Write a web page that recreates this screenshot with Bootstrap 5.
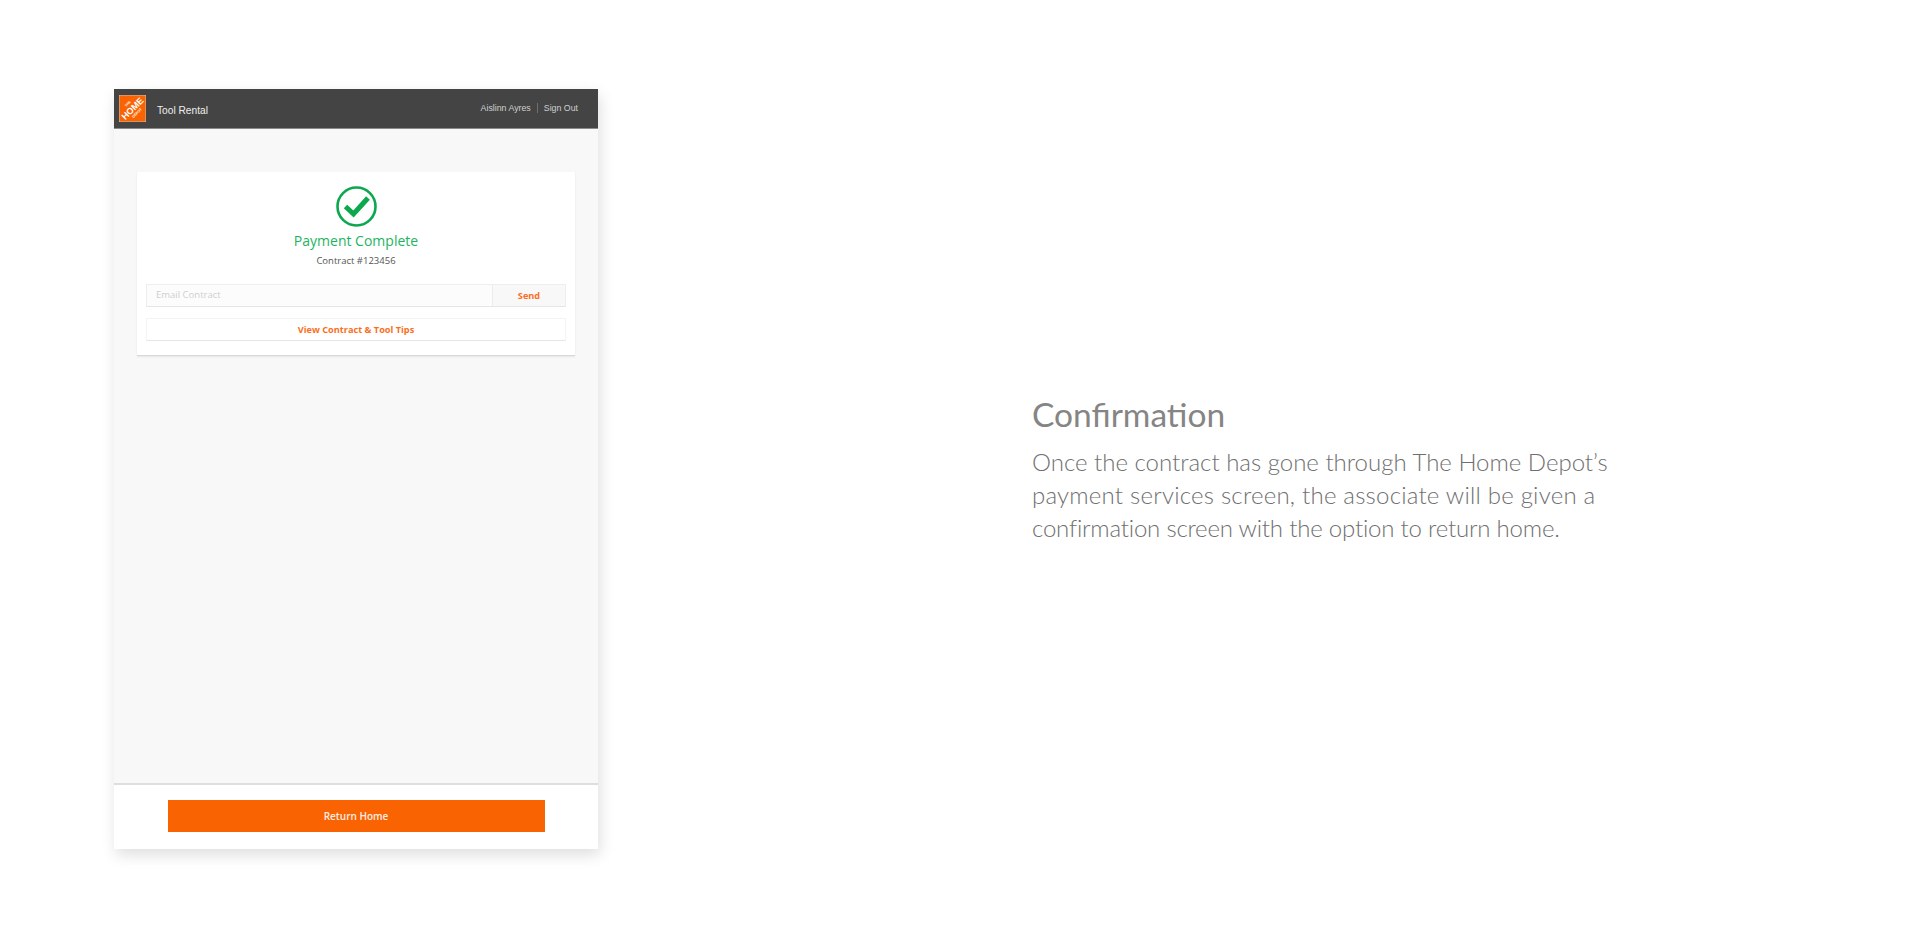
<!DOCTYPE html>
<html lang="en">
<head>
  <meta charset="UTF-8">
  <meta name="viewport" content="width=device-width, initial-scale=1.0">
  <title>Confirmation - Tool Rental</title>
  <link href="https://cdn.jsdelivr.net/npm/bootstrap@5.3.0/dist/css/bootstrap.min.css" rel="stylesheet">
  <style>
    body {
      background: #fff;
      height: 930px;
      overflow: hidden;
      font-family: "Open Sans", sans-serif;
    }
    .stage { padding: 89px 0 0 114px; }
    .tablet {
      width: 484px;
      height: 760px;
      background: #f8f8f8;
      box-shadow: 2px 6px 14px rgba(0, 0, 0, .13);
    }
    .topbar {
      height: 40px;
      background: #444;
      border-bottom: 1px solid #8a8a8a;
      padding: 0 20px 0 5px;
      font-family: "Liberation Sans", sans-serif;
      color: #e4e4e4;
    }
    .hd-logo { width: 27px; height: 27px; display: block; }
    .app-name { font-size: 10.2px; margin-left: 11px; margin-top: 4px; color: #eee; }
    .user-links { font-size: 8.8px; color: #cfcfcf; margin-top: 1px; }
    .user-links span + span { border-left: 1px solid #707070; margin-left: 6px; padding-left: 6px; }
    .main-area { padding: 43px 23px 0; }
    .pay-card {
      height: 184px;
      background: #fff;
      border-bottom: 1px solid #d8d8d8;
      box-shadow: 0 1px 2px rgba(0, 0, 0, .08);
      padding: 14px 9px 0;
      text-align: center;
    }
    .check-icon { width: 41px; height: 41px; display: block; margin: 0 auto; }
    .pay-title { color: #1db45f; font-size: 14px; line-height: 20px; margin-top: 4px; }
    .contract-no { color: #555; font-size: 9.5px; line-height: 14px; margin-top: 3px; }
    .email-row {
      height: 23px;
      margin-top: 16px;
      background: #fcfcfc;
      border: 1px solid #eee;
      border-bottom-color: #e6e6e6;
      font-size: 9.5px;
    }
    .email-ph { padding-left: 9px; color: #cfcfcf; }
    .send-cell {
      width: 73px;
      height: 100%;
      background: #f8f8f8;
      border-left: 1px solid #ececec;
    }
    .orange-txt { color: #fa6f1e; font-weight: 700; font-size: 9.2px; }
    .tips-btn {
      height: 23px;
      margin-top: 11px;
      background: #fff;
      border: 1px solid #f4f4f4;
      border-bottom: 1px solid #e6e6e6;
    }
    .bottom-bar {
      height: 66px;
      background: #fff;
      border-top: 2px solid #dedede;
      padding-top: 15px;
    }
    .return-btn {
      width: 377px;
      height: 32px;
      background: #f96302;
      color: #fdeee4;
      font-size: 10px;
      font-weight: 600;
      border-radius: 0;
      border: 0;
      padding: 0;
    }
    .copy-col { width: 600px; margin-left: 434px; padding-top: 303px; color: #808080; font-family: Lato, sans-serif; }
    .copy-title { font-size: 33.5px; font-weight: 400; line-height: 44px; margin: 0; color: #858585; }
    .copy-body { font-size: 24px; font-weight: 300; line-height: 33px; margin: 9px 0 0; color: #6f6f6f; }
    .line-wide { letter-spacing: .22px; }
    .line-tight { letter-spacing: -.2px; }
  </style>
</head>
<body>
  <div class="d-flex stage">
    <div class="tablet d-flex flex-column">
      <div class="topbar d-flex align-items-center">
        <svg class="hd-logo" viewBox="0 0 27 27">
          <rect x=".25" y=".25" width="26.5" height="26.5" fill="#f96302" stroke="#f3c9ab" stroke-width=".5"/>
          <g transform="rotate(-45 13.5 13.5)" fill="#fff" text-anchor="middle" font-family="Liberation Sans, sans-serif" font-weight="700">
            <text x="13.5" y="8" font-size="3.4">THE</text>
            <text x="13.5" y="16.6" font-size="9">HOME</text>
            <text x="13.5" y="21" font-size="3.6">DEPOT</text>
          </g>
        </svg>
        <div class="app-name">Tool Rental</div>
        <div class="user-links ms-auto"><span>Aislinn Ayres</span><span>Sign Out</span></div>
      </div>
      <div class="main-area flex-grow-1">
        <div class="pay-card">
          <svg class="check-icon" viewBox="0 0 41 41">
            <circle cx="20.5" cy="20.5" r="19" fill="none" stroke="#0ba84e" stroke-width="2.6"/>
            <path d="M9.5 20.5l8 7.5 14.5-16" fill="none" stroke="#0ba84e" stroke-width="5"/>
          </svg>
          <div class="pay-title">Payment Complete</div>
          <div class="contract-no">Contract #123456</div>
          <div class="email-row d-flex align-items-center">
            <div class="email-ph flex-grow-1 text-start">Email Contract</div>
            <div class="send-cell orange-txt d-flex align-items-center justify-content-center">Send</div>
          </div>
          <div class="tips-btn orange-txt d-flex align-items-center justify-content-center">View Contract &amp; Tool Tips</div>
        </div>
      </div>
      <div class="bottom-bar text-center">
        <button type="button" class="btn return-btn">Return Home</button>
      </div>
    </div>
    <div class="copy-col">
      <h1 class="copy-title">Confirmation</h1>
      <p class="copy-body">Once the contract has gone through The Home Depot’s<br><span class="line-wide">payment services screen, the associate will be given a</span><br><span class="line-tight">confirmation screen with the option to return home.</span></p>
    </div>
  </div>
  <script src="https://cdn.jsdelivr.net/npm/bootstrap@5.3.0/dist/js/bootstrap.bundle.min.js"></script>
</body>
</html>
